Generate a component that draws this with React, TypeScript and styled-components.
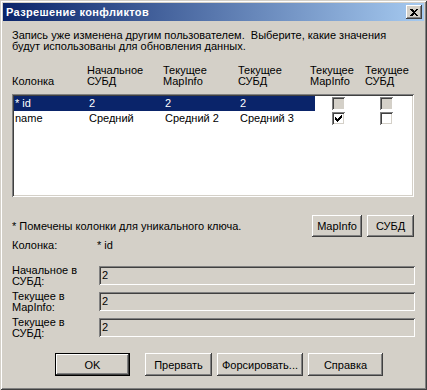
import styled, { createGlobalStyle } from "styled-components"

const GlobalStyle = createGlobalStyle`
  html, body {
    margin: 0;
    padding: 0;
    background: #d4d0c8;
  }
  body {
    font-family: "Liberation Sans", Arial, sans-serif;
    font-size: 11px;
    color: #000;
  }
`

type RowType = {
  name: string
  start: string
  mapinfo: string
  dbms: string
  useMapinfo: boolean
  useDbms: boolean
  key?: boolean
}

const rows: RowType[] = [
  { name: "* id", start: "2", mapinfo: "2", dbms: "2", useMapinfo: false, useDbms: false, key: true },
  { name: "name", start: "Средний", mapinfo: "Средний 2", dbms: "Средний 3", useMapinfo: true, useDbms: false },
]

const fields = [
  { label: "Начальное в", label2: "СУБД:", value: "2" },
  { label: "Текущее в", label2: "MapInfo:", value: "2" },
  { label: "Текущее в", label2: "СУБД:", value: "2" },
]

const CheckMark = () => {
  const tops = [2, 3, 4, 3, 2, 1, 0]
  return (
    <svg width="13" height="13" viewBox="0 0 13 13" shapeRendering="crispEdges">
      {tops.map((t, i) => (
        <rect key={i} x={3 + i} y={3 + t} width="1" height="3" fill="#000" />
      ))}
    </svg>
  )
}

export default function App() {
  return (
    <>
      <GlobalStyle />
      <Window>
        <TitleBar>
          <Title>Разрешение конфликтов</Title>
          <CloseButton>
            <svg width="8" height="7" viewBox="0 0 8 7" shapeRendering="crispEdges">
              <path d="M0 0h2l2 2 2-2h2L5 3.5 8 7H6L4 5 2 7H0l3-3.5z" fill="#000" />
            </svg>
          </CloseButton>
        </TitleBar>
        <Content>
          <Intro>
            Запись уже изменена другим пользователем.&nbsp; Выберите, какие значения
            <br />
            будут использованы для обновления данных.
          </Intro>
          <Header>
            <span>Колонка</span>
            <span>Начальное<br />СУБД</span>
            <span>Текущее<br />MapInfo</span>
            <span>Текущее<br />СУБД</span>
            <span>Текущее<br />MapInfo</span>
            <span>Текущее<br />СУБД</span>
          </Header>
          <List>
            {rows.map((r) => (
              <Row key={r.name}>
                <Cell $selected={r.key} $first>{r.name}</Cell>
                <Cell $selected={r.key}>{r.start}</Cell>
                <Cell $selected={r.key}>{r.mapinfo}</Cell>
                <Cell $selected={r.key}>{r.dbms}</Cell>
                <CheckCell>
                  <Check $disabled={r.key}>{r.useMapinfo && <CheckMark />}</Check>
                </CheckCell>
                <CheckCell>
                  <Check $disabled={r.key}>{r.useDbms && <CheckMark />}</Check>
                </CheckCell>
              </Row>
            ))}
          </List>
          <KeyRow>
            <Note>* Помечены колонки для уникального ключа.</Note>
            <Button $w={50} $h={22}>MapInfo</Button>
            <Button $w={47} $h={22} $ml={5}>СУБД</Button>
          </KeyRow>
          <ColumnRow>
            <span>Колонка:</span>
            <span>* id</span>
          </ColumnRow>
          <Fields>
            {fields.map((f, i) => (
              <FieldRow key={i}>
                <FieldLabel>
                  {f.label}
                  <br />
                  {f.label2}
                </FieldLabel>
                <Field>{f.value}</Field>
              </FieldRow>
            ))}
          </Fields>
          <ButtonRow>
            <Button $w={75} $h={23} $default>OK</Button>
            <Button $w={67} $h={23} $ml={15}>Прервать</Button>
            <Button $w={86} $h={23} $ml={5}>Форсировать...</Button>
            <Button $w={75} $h={23} $ml={5}>Справка</Button>
          </ButtonRow>
        </Content>
      </Window>
    </>
  )
}

const raised = `
  box-shadow: inset -1px -1px 0 #404040, inset 1px 1px 0 #ffffff,
    inset -2px -2px 0 #808080, inset 2px 2px 0 #d4d0c8;
`

const sunken = `
  box-shadow: inset 1px 1px 0 #808080, inset -1px -1px 0 #ffffff,
    inset 2px 2px 0 #404040, inset -2px -2px 0 #d4d0c8;
`

const Window = styled.div`
  width: 427px;
  height: 390px;
  box-sizing: border-box;
  padding: 3px;
  display: flex;
  flex-direction: column;
  background: #d4d0c8;
  box-shadow: inset 1px 1px 0 #d4d0c8, inset -1px -1px 0 #404040,
    inset 2px 2px 0 #ffffff, inset -2px -2px 0 #808080;
`

const TitleBar = styled.div`
  height: 18px;
  display: flex;
  align-items: center;
  padding: 0 2px 0 3px;
  background: linear-gradient(to right, #0a246a, #a6caf0);
  color: #fff;
`

const Title = styled.div`
  flex: 1;
  font-weight: bold;
  font-size: 11px;
  letter-spacing: 0.35px;
  white-space: nowrap;
`

const CloseButton = styled.div`
  width: 16px;
  height: 14px;
  display: flex;
  align-items: center;
  justify-content: center;
  background: #d4d0c8;
  ${raised}
`

const Content = styled.div`
  display: flex;
  flex-direction: column;
  padding: 0 10px 0 9px;
  line-height: 11px;
`

const Intro = styled.div`
  margin-top: 9px;
  white-space: nowrap;
`

const Header = styled.div`
  margin-top: 13px;
  display: grid;
  grid-template-columns: 75px 76px 75px 72px 55px 1fr;
  align-items: end;
  white-space: nowrap;
`

const List = styled.div`
  margin-top: 7px;
  height: 103px;
  box-sizing: border-box;
  padding: 2px;
  background: #fff;
  ${sunken}
`

const Row = styled.div`
  display: grid;
  grid-template-columns: 75px 76px 75px 75px 48px 1fr;
  height: 15px;
  align-items: center;
`

const Cell = styled.div<{ $selected?: boolean; $first?: boolean }>`
  height: 15px;
  line-height: 15px;
  padding-left: ${(p) => (p.$first ? "1px" : "0")};
  background: ${(p) => (p.$selected ? "#0a246a" : "transparent")};
  color: ${(p) => (p.$selected ? "#fff" : "#000")};
  white-space: nowrap;
  overflow: hidden;
`

const CheckCell = styled.div`
  padding-left: 17px;
  display: flex;
  align-items: center;
`

const Check = styled.div<{ $disabled?: boolean }>`
  width: 13px;
  height: 13px;
  background: ${(p) => (p.$disabled ? "#d4d0c8" : "#fff")};
  ${sunken}

  svg {
    display: block;
  }
`

const KeyRow = styled.div`
  margin-top: 18px;
  display: flex;
  align-items: center;
`

const Note = styled.div`
  flex: 1;
  white-space: nowrap;
`

const Button = styled.button<{ $w: number; $h: number; $ml?: number; $default?: boolean }>`
  width: ${(p) => p.$w}px;
  height: ${(p) => p.$h}px;
  margin: 0 0 0 ${(p) => p.$ml ?? 0}px;
  padding: 0;
  box-sizing: border-box;
  border: ${(p) => (p.$default ? "1px solid #000" : "none")};
  background: #d4d0c8;
  font-family: "Liberation Sans", Arial, sans-serif;
  font-size: 11px;
  color: #000;
  ${raised}
`

const ColumnRow = styled.div`
  margin-top: 3px;
  display: grid;
  grid-template-columns: 85px 1fr;
`

const Fields = styled.div`
  margin-top: 14px;
  display: flex;
  flex-direction: column;
`

const FieldRow = styled.div`
  height: 26px;
  display: grid;
  grid-template-columns: 87px 1fr;
  align-items: start;
`

const FieldLabel = styled.div`
  white-space: nowrap;
`

const Field = styled.div`
  margin: 1px -1px 0 0;
  height: 19px;
  line-height: 19px;
  padding-left: 3px;
  background: #d4d0c8;
  ${sunken}
`

const ButtonRow = styled.div`
  margin-top: 10px;
  padding-left: 43px;
  display: flex;
`
